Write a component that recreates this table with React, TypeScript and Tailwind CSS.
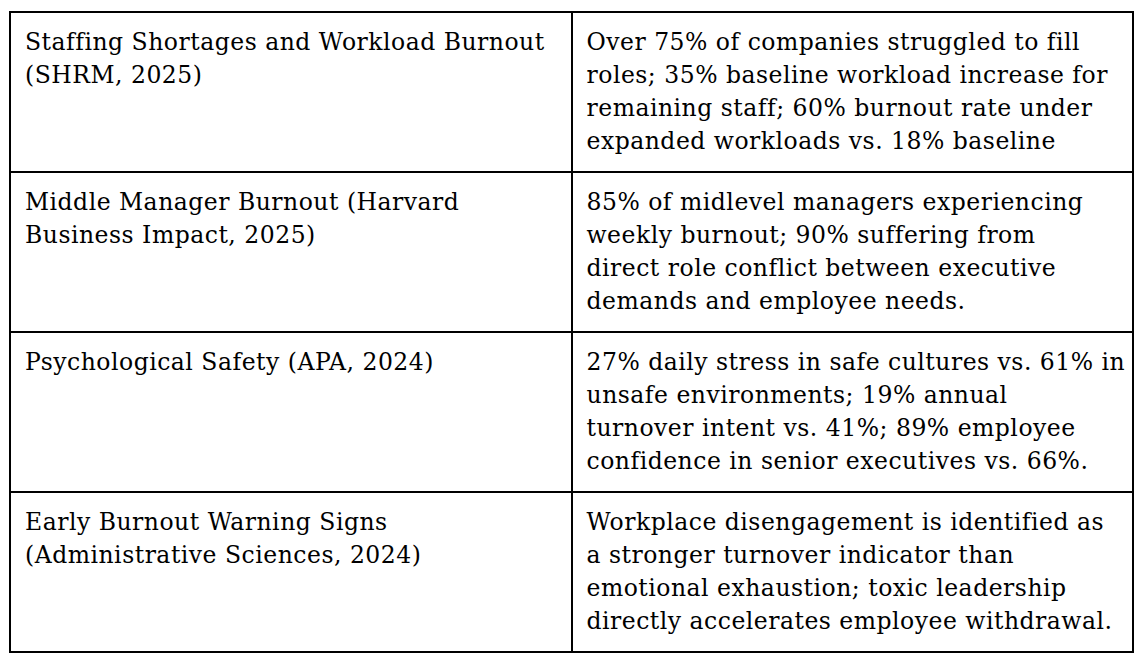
import React from "react";

const rows: { source: string[]; finding: string[] }[] = [
  {
    source: ["Staffing Shortages and Workload Burnout", "(SHRM, 2025)"],
    finding: [
      "Over 75% of companies struggled to fill",
      "roles; 35% baseline workload increase for",
      "remaining staff; 60% burnout rate under",
      "expanded workloads vs. 18% baseline",
    ],
  },
  {
    source: ["Middle Manager Burnout (Harvard", "Business Impact, 2025)"],
    finding: [
      "85% of midlevel managers experiencing",
      "weekly burnout; 90% suffering from",
      "direct role conflict between executive",
      "demands and employee needs.",
    ],
  },
  {
    source: ["Psychological Safety (APA, 2024)"],
    finding: [
      "27% daily stress in safe cultures vs. 61% in",
      "unsafe environments; 19% annual",
      "turnover intent vs. 41%; 89% employee",
      "confidence in senior executives vs. 66%.",
    ],
  },
  {
    source: ["Early Burnout Warning Signs", "(Administrative Sciences, 2024)"],
    finding: [
      "Workplace disengagement is identified as",
      "a stronger turnover indicator than",
      "emotional exhaustion; toxic leadership",
      "directly accelerates employee withdrawal.",
    ],
  },
];

const Lines = ({ lines }: { lines: string[] }) => (
  <>
    {lines.map((line) => (
      <span key={line} className="block whitespace-nowrap">
        {line}
      </span>
    ))}
  </>
);

const App = () => {
  return (
    <div className="min-h-screen bg-white pl-[9px] pt-[11px] text-black">
      <table
        className="w-[1125px] table-fixed border-collapse text-[23.5px] leading-[33px] tracking-[0.5px]"
        style={{ fontFamily: '"DejaVu Serif", "Liberation Serif", serif' }}
      >
        <tbody>
          {rows.map((row) => (
            <tr key={row.source[0]}>
              <td className="w-1/2 border-2 border-black px-[14px] py-[13px] align-top">
                <Lines lines={row.source} />
              </td>
              <td className="w-1/2 border-2 border-black px-[14px] py-[13px] align-top">
                <Lines lines={row.finding} />
              </td>
            </tr>
          ))}
        </tbody>
      </table>
    </div>
  );
};

export default App;
